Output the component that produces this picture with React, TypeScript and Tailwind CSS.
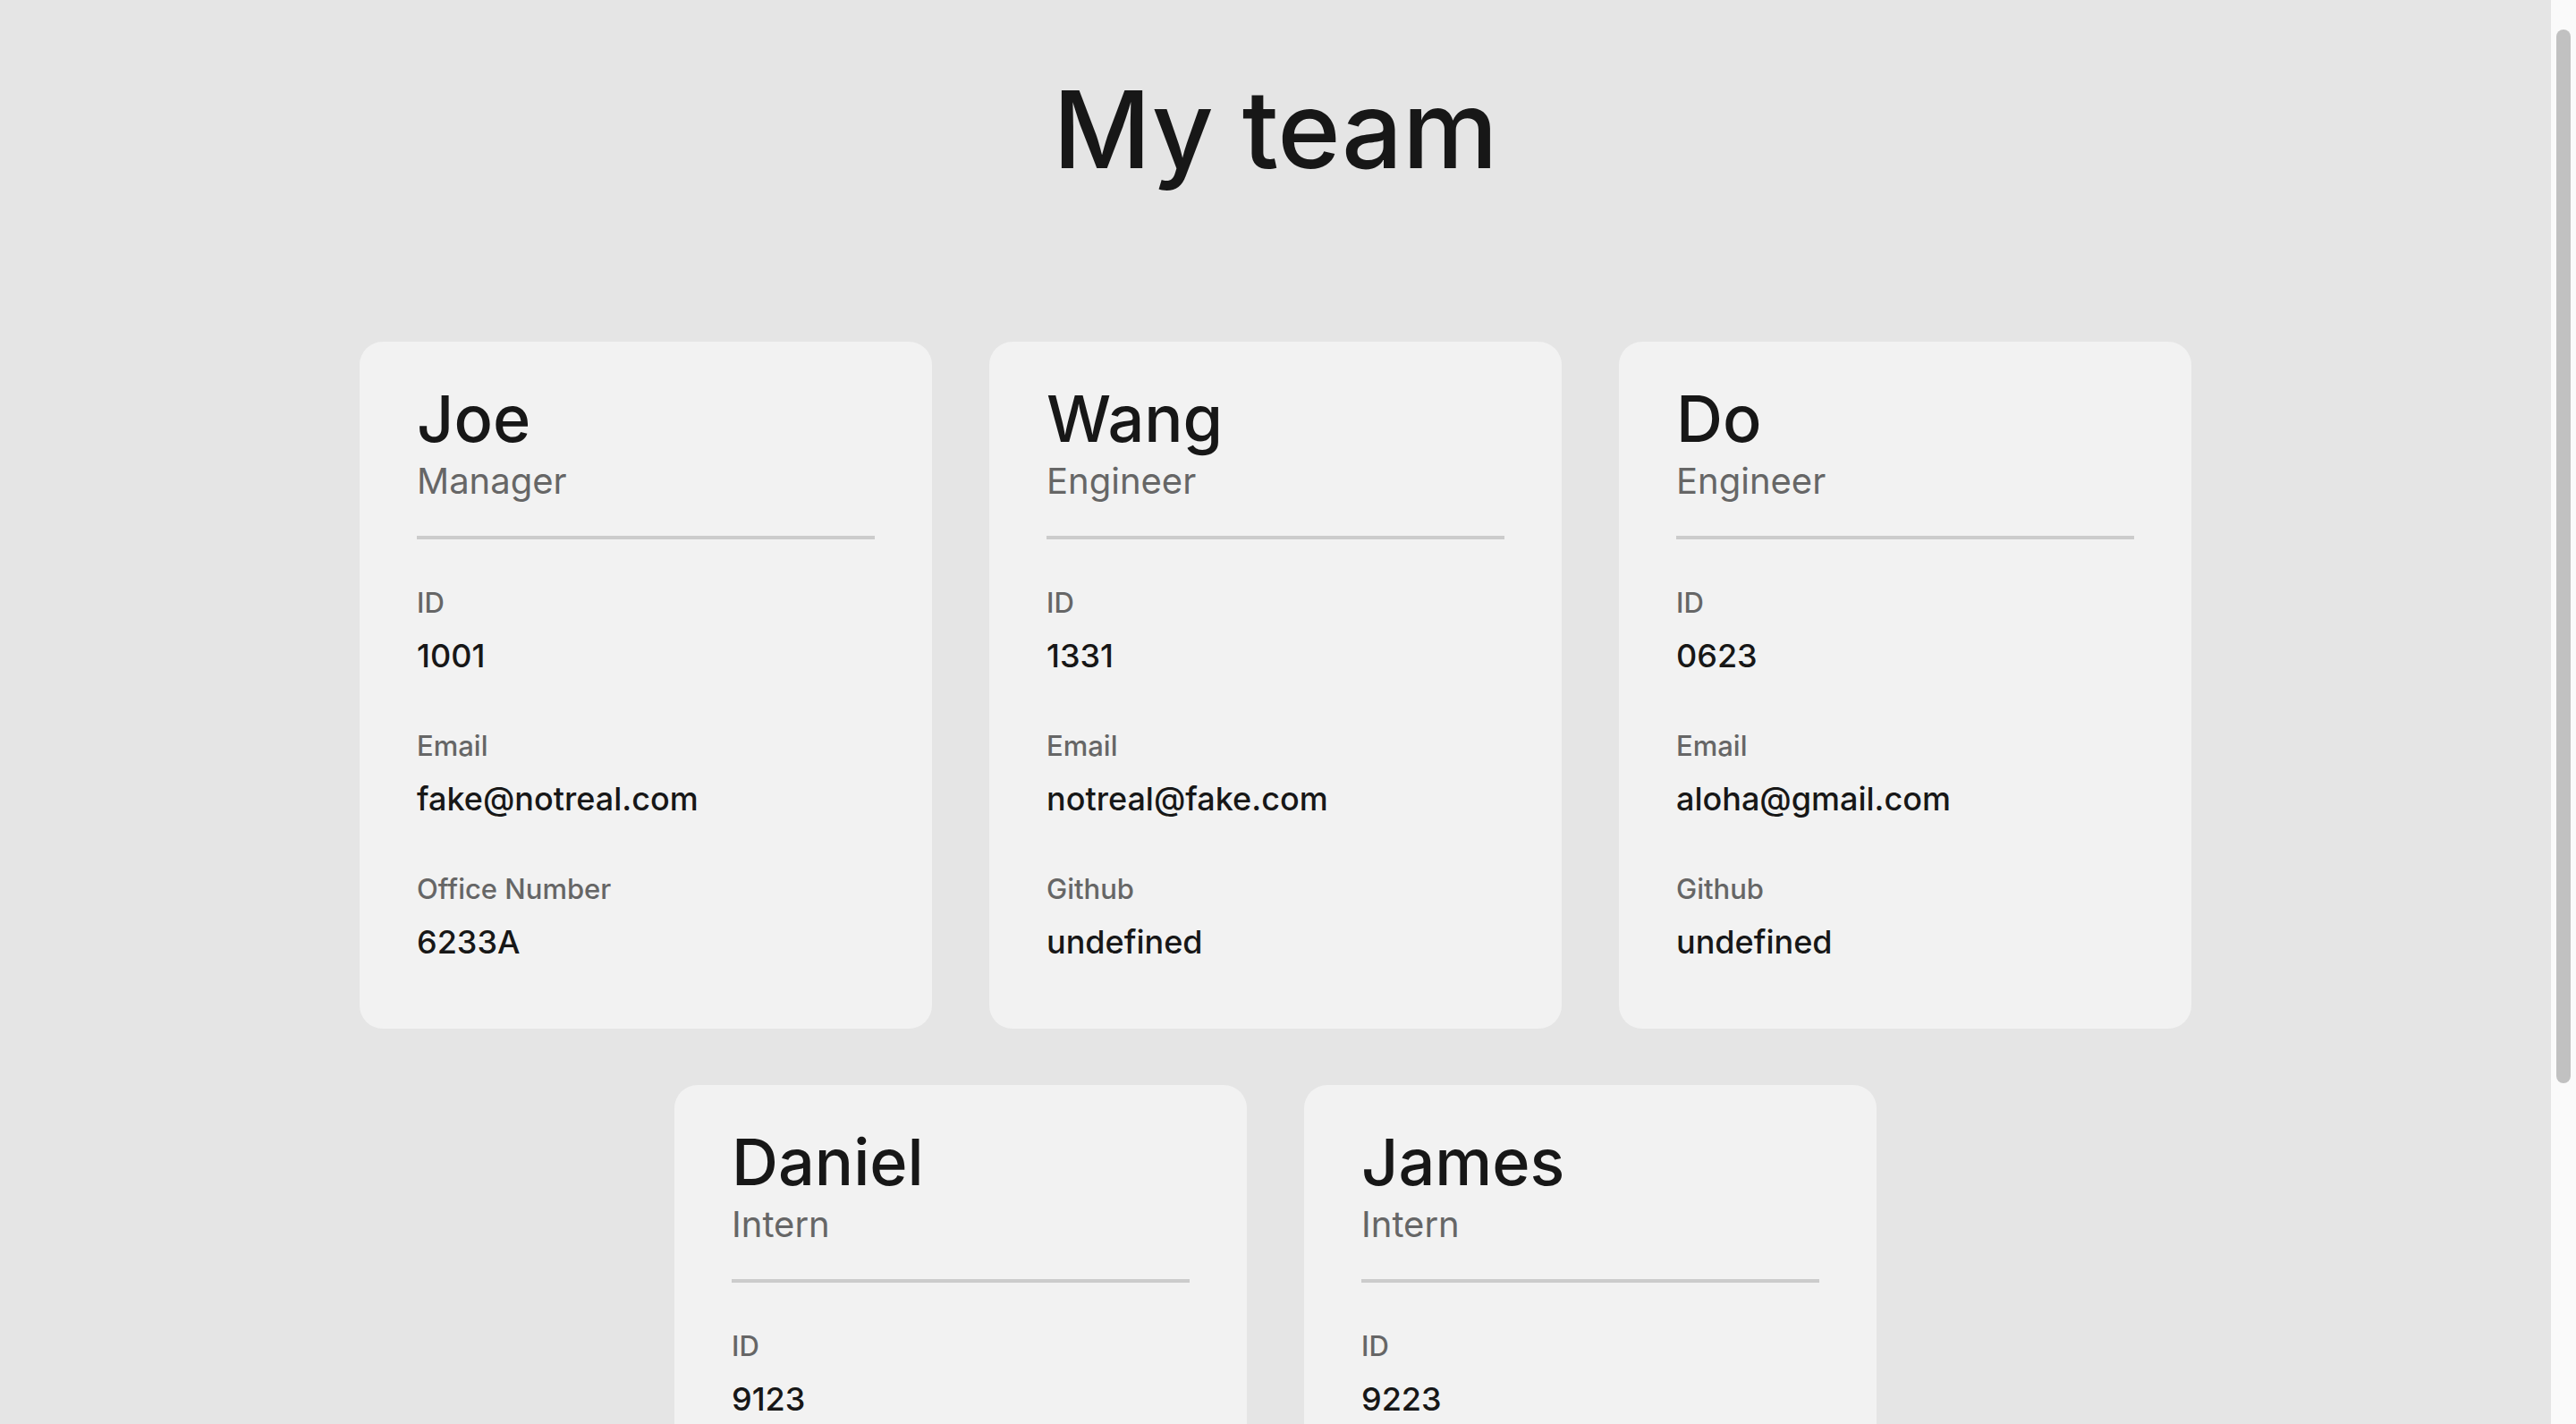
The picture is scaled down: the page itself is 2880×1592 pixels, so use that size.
const team = [
  { name: "Joe", role: "Manager", id: "1001", email: "fake@notreal.com", extraLabel: "Office Number", extra: "6233A" },
  { name: "Wang", role: "Engineer", id: "1331", email: "notreal@fake.com", extraLabel: "Github", extra: "undefined" },
  { name: "Do", role: "Engineer", id: "0623", email: "aloha@gmail.com", extraLabel: "Github", extra: "undefined" },
  { name: "Daniel", role: "Intern", id: "9123", email: "daniel@intern.com", extraLabel: "School", extra: "undefined" },
  { name: "James", role: "Intern", id: "9223", email: "james@intern.com", extraLabel: "School", extra: "undefined" },
];

type Member = (typeof team)[number];

const Field = ({ label, value, first }: { label: string; value: string; first?: boolean }) => {
  return (
    <div className={first ? "mt-[55px]" : "mt-[67px]"}>
      <p className="text-[31px] leading-none font-medium text-[#666666]">{label}</p>
      <p className="mt-[26px] text-[36px] leading-none font-medium text-[#171717]">{value}</p>
    </div>
  );
};

const MemberCard = ({ member }: { member: Member }) => {
  return (
    <div className="w-[640px] bg-[#f2f2f2] rounded-[26px] px-16 pt-[50px] pb-[79px]">
      <h2 className="text-[72px] leading-none font-medium text-[#171717]">{member.name}</h2>
      <p className="mt-[14px] text-[40px] leading-none text-[#666666]">{member.role}</p>
      <div className="mt-[41px] h-[4px] bg-[#cccccc]"></div>
      <Field label="ID" value={member.id} first />
      <Field label="Email" value={member.email} />
      <Field label={member.extraLabel} value={member.extra} />
    </div>
  );
};

const App = () => {
  return (
    <div className="flex h-screen bg-[#e5e5e5] [font-family:Inter,'Noto_Sans',sans-serif]">
      <div className="flex-1 overflow-y-auto [scrollbar-width:none]">
        <main className="pt-[85px] pb-24">
          <h1 className="text-center text-[120px] leading-none font-medium text-[#171717]">My team</h1>
          <section className="mt-[177px] max-w-[2100px] mx-auto flex flex-wrap justify-center gap-x-16 gap-y-[63px]">
            {team.map((m) => (
              <MemberCard key={m.name} member={m} />
            ))}
          </section>
        </main>
      </div>
      {/* scrollbar strip */}
      <div className="w-[28px] shrink-0 bg-[#fafafa] pt-[33px] pl-[6px] pr-[6px]">
        <div className="h-[1178px] rounded-full bg-[#c1c1c1]"></div>
      </div>
    </div>
  );
};

export default App;
